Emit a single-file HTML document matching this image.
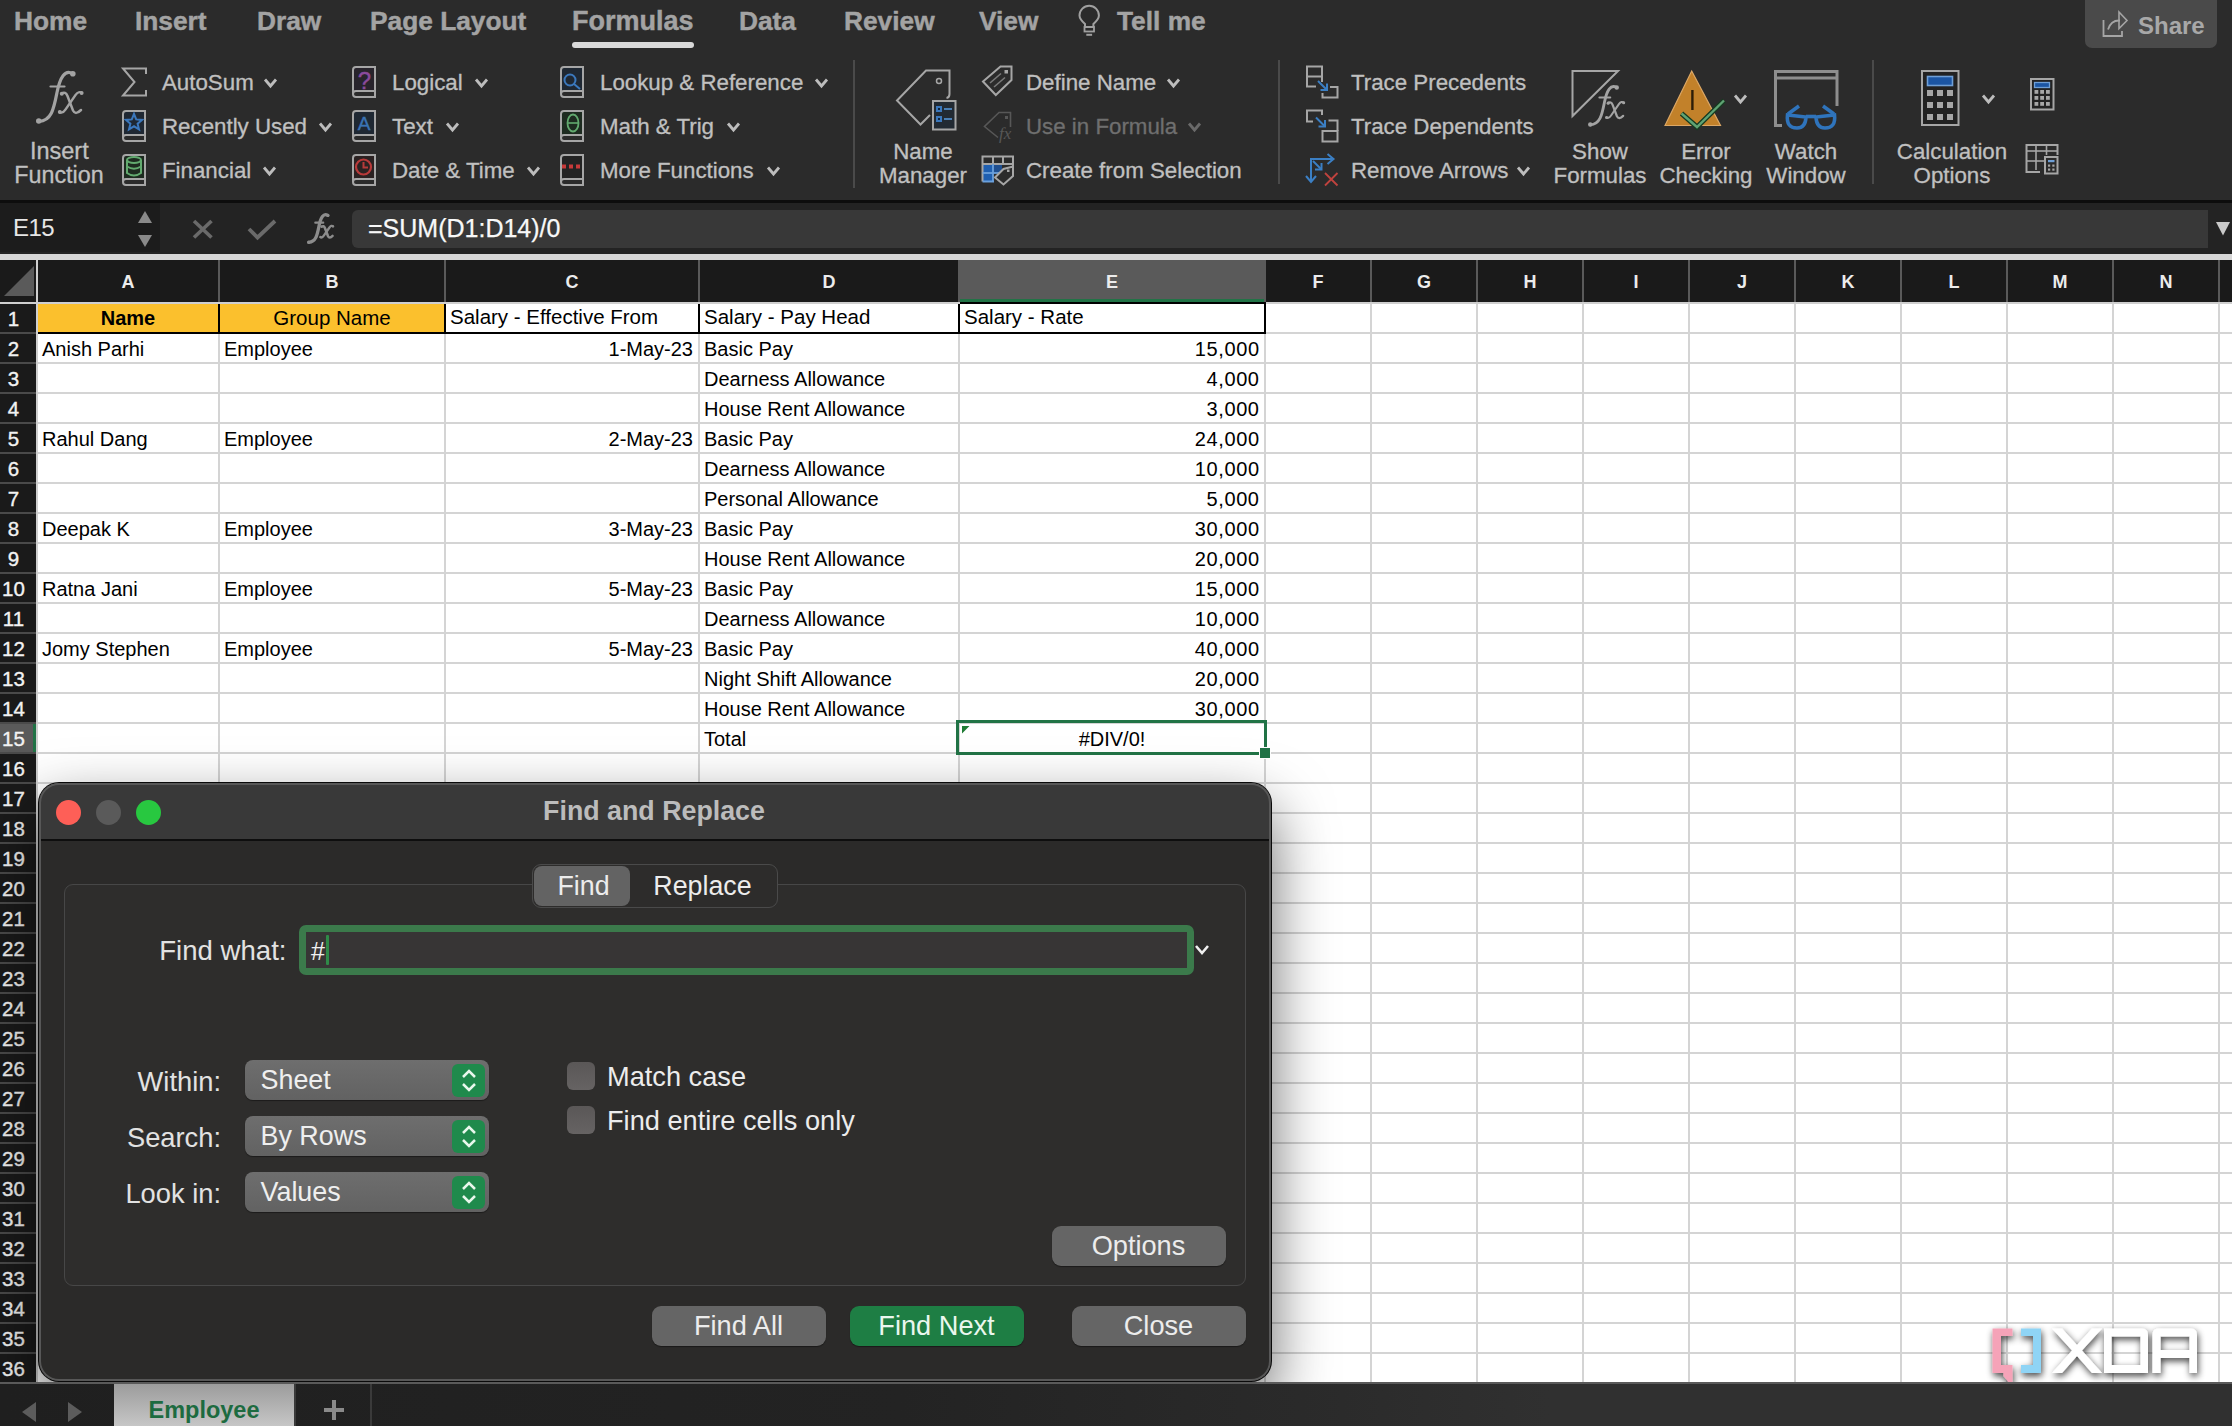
<!DOCTYPE html>
<html><head><meta charset="utf-8">
<style>
html,body{margin:0;padding:0;}
body{width:2232px;height:1426px;overflow:hidden;position:relative;background:#2b2b2b;font-family:"Liberation Sans",sans-serif;}
.t{position:absolute;white-space:pre;}
.r{position:absolute;}
</style></head><body>

<div class="t" style="top:8.2px;font-size:26.3px;line-height:26.3px;color:#a3a3a3;font-weight:700;left:14px;-webkit-text-stroke:0.45px #a3a3a3;">Home</div>
<div class="t" style="top:8.2px;font-size:26.3px;line-height:26.3px;color:#a3a3a3;font-weight:700;left:135px;-webkit-text-stroke:0.45px #a3a3a3;">Insert</div>
<div class="t" style="top:8.2px;font-size:26.3px;line-height:26.3px;color:#a3a3a3;font-weight:700;left:257px;-webkit-text-stroke:0.45px #a3a3a3;">Draw</div>
<div class="t" style="top:8.2px;font-size:26.3px;line-height:26.3px;color:#a3a3a3;font-weight:700;left:370px;-webkit-text-stroke:0.45px #a3a3a3;">Page Layout</div>
<div class="t" style="top:7.6px;font-size:27px;line-height:27px;color:#a3a3a3;font-weight:700;left:572px;-webkit-text-stroke:0.45px #a3a3a3;">Formulas</div>
<div class="t" style="top:8.2px;font-size:26.3px;line-height:26.3px;color:#a3a3a3;font-weight:700;left:739px;-webkit-text-stroke:0.45px #a3a3a3;">Data</div>
<div class="t" style="top:8.2px;font-size:26.3px;line-height:26.3px;color:#a3a3a3;font-weight:700;left:844px;-webkit-text-stroke:0.45px #a3a3a3;">Review</div>
<div class="t" style="top:8.2px;font-size:26.3px;line-height:26.3px;color:#a3a3a3;font-weight:700;left:979px;-webkit-text-stroke:0.45px #a3a3a3;">View</div>
<div class="t" style="top:8.2px;font-size:26.3px;line-height:26.3px;color:#a3a3a3;font-weight:700;left:1117px;-webkit-text-stroke:0.45px #a3a3a3;">Tell me</div>
<div class="r" style="left:572px;top:42px;width:122px;height:6px;background:#d9d9d9;border-radius:3px;"></div>
<div class="r" style="left:2085px;top:0px;width:132px;height:48px;background:#4a4a4a;border-radius:0 0 7px 7px;"></div>
<div class="t" style="top:13.7px;font-size:24px;line-height:24px;color:#a8a8a8;font-weight:700;left:2138px;">Share</div>
<div class="t" style="top:139.6px;font-size:23.5px;line-height:23.5px;color:#c0c0c0;font-weight:400;left:-940.7px;width:2000px;text-align:center;-webkit-text-stroke:0.3px #c0c0c0;">Insert</div>
<div class="t" style="top:163.8px;font-size:23.3px;line-height:23.3px;color:#c0c0c0;font-weight:400;left:-941px;width:2000px;text-align:center;-webkit-text-stroke:0.3px #c0c0c0;">Function</div>
<div class="t" style="top:71.6px;font-size:22.3px;line-height:22.3px;color:#c0c0c0;font-weight:400;left:162px;-webkit-text-stroke:0.3px #c0c0c0;">AutoSum</div>
<div class="t" style="top:116.1px;font-size:22.3px;line-height:22.3px;color:#c0c0c0;font-weight:400;left:162px;-webkit-text-stroke:0.3px #c0c0c0;">Recently Used</div>
<div class="t" style="top:160.1px;font-size:22.3px;line-height:22.3px;color:#c0c0c0;font-weight:400;left:162px;-webkit-text-stroke:0.3px #c0c0c0;">Financial</div>
<div class="t" style="top:71.6px;font-size:22.3px;line-height:22.3px;color:#c0c0c0;font-weight:400;left:392px;-webkit-text-stroke:0.3px #c0c0c0;">Logical</div>
<div class="t" style="top:116.1px;font-size:22.3px;line-height:22.3px;color:#c0c0c0;font-weight:400;left:392px;-webkit-text-stroke:0.3px #c0c0c0;">Text</div>
<div class="t" style="top:160.1px;font-size:22.3px;line-height:22.3px;color:#c0c0c0;font-weight:400;left:392px;-webkit-text-stroke:0.3px #c0c0c0;">Date &amp; Time</div>
<div class="t" style="top:71.6px;font-size:22.3px;line-height:22.3px;color:#c0c0c0;font-weight:400;left:600px;-webkit-text-stroke:0.3px #c0c0c0;">Lookup &amp; Reference</div>
<div class="t" style="top:116.1px;font-size:22.3px;line-height:22.3px;color:#c0c0c0;font-weight:400;left:600px;-webkit-text-stroke:0.3px #c0c0c0;">Math &amp; Trig</div>
<div class="t" style="top:160.1px;font-size:22.3px;line-height:22.3px;color:#c0c0c0;font-weight:400;left:600px;-webkit-text-stroke:0.3px #c0c0c0;">More Functions</div>
<div class="r" style="left:853px;top:60px;width:2px;height:128px;background:#4a4a4a;"></div>
<div class="t" style="top:140.6px;font-size:22.3px;line-height:22.3px;color:#c0c0c0;font-weight:400;left:-77px;width:2000px;text-align:center;-webkit-text-stroke:0.3px #c0c0c0;">Name</div>
<div class="t" style="top:164.6px;font-size:22.3px;line-height:22.3px;color:#c0c0c0;font-weight:400;left:-77px;width:2000px;text-align:center;-webkit-text-stroke:0.3px #c0c0c0;">Manager</div>
<div class="t" style="top:71.6px;font-size:22.3px;line-height:22.3px;color:#c0c0c0;font-weight:400;left:1026px;-webkit-text-stroke:0.3px #c0c0c0;">Define Name</div>
<div class="t" style="top:116.1px;font-size:22.3px;line-height:22.3px;color:#6f6f6f;font-weight:400;left:1026px;-webkit-text-stroke:0.3px #6f6f6f;">Use in Formula</div>
<div class="t" style="top:160.1px;font-size:22.3px;line-height:22.3px;color:#c0c0c0;font-weight:400;left:1026px;-webkit-text-stroke:0.3px #c0c0c0;">Create from Selection</div>
<div class="r" style="left:1278px;top:60px;width:2px;height:124px;background:#4a4a4a;"></div>
<div class="t" style="top:71.6px;font-size:22.3px;line-height:22.3px;color:#c0c0c0;font-weight:400;left:1351px;-webkit-text-stroke:0.3px #c0c0c0;">Trace Precedents</div>
<div class="t" style="top:116.1px;font-size:22.3px;line-height:22.3px;color:#c0c0c0;font-weight:400;left:1351px;-webkit-text-stroke:0.3px #c0c0c0;">Trace Dependents</div>
<div class="t" style="top:160.1px;font-size:22.3px;line-height:22.3px;color:#c0c0c0;font-weight:400;left:1351px;-webkit-text-stroke:0.3px #c0c0c0;">Remove Arrows</div>
<div class="t" style="top:140.6px;font-size:22.3px;line-height:22.3px;color:#c0c0c0;font-weight:400;left:600px;width:2000px;text-align:center;-webkit-text-stroke:0.3px #c0c0c0;">Show</div>
<div class="t" style="top:164.6px;font-size:22.3px;line-height:22.3px;color:#c0c0c0;font-weight:400;left:600px;width:2000px;text-align:center;-webkit-text-stroke:0.3px #c0c0c0;">Formulas</div>
<div class="t" style="top:140.6px;font-size:22.3px;line-height:22.3px;color:#c0c0c0;font-weight:400;left:706px;width:2000px;text-align:center;-webkit-text-stroke:0.3px #c0c0c0;">Error</div>
<div class="t" style="top:164.6px;font-size:22.3px;line-height:22.3px;color:#c0c0c0;font-weight:400;left:706px;width:2000px;text-align:center;-webkit-text-stroke:0.3px #c0c0c0;">Checking</div>
<div class="t" style="top:140.6px;font-size:22.3px;line-height:22.3px;color:#c0c0c0;font-weight:400;left:806px;width:2000px;text-align:center;-webkit-text-stroke:0.3px #c0c0c0;">Watch</div>
<div class="t" style="top:164.6px;font-size:22.3px;line-height:22.3px;color:#c0c0c0;font-weight:400;left:806px;width:2000px;text-align:center;-webkit-text-stroke:0.3px #c0c0c0;">Window</div>
<div class="r" style="left:1872px;top:60px;width:2px;height:124px;background:#4a4a4a;"></div>
<div class="t" style="top:140.6px;font-size:22.3px;line-height:22.3px;color:#c0c0c0;font-weight:400;left:952px;width:2000px;text-align:center;-webkit-text-stroke:0.3px #c0c0c0;">Calculation</div>
<div class="t" style="top:164.6px;font-size:22.3px;line-height:22.3px;color:#c0c0c0;font-weight:400;left:952px;width:2000px;text-align:center;-webkit-text-stroke:0.3px #c0c0c0;">Options</div>
<div class="r" style="left:0px;top:200px;width:2232px;height:3px;background:#0d0d0d;"></div>
<div class="r" style="left:0px;top:203px;width:2232px;height:51px;background:#232323;"></div>
<div class="r" style="left:0px;top:203px;width:160px;height:49px;background:#1c1c1c;"></div>
<div class="t" style="top:215.7px;font-size:24px;line-height:24px;color:#e6e6e6;font-weight:400;left:13px;letter-spacing:-0.5px;">E15</div>
<div class="r" style="left:352px;top:210px;width:1856px;height:38px;background:#383838;border-radius:6px 0 0 6px;"></div>
<div class="t" style="top:216.3px;font-size:25px;line-height:25px;color:#f8f8f8;font-weight:400;left:368px;-webkit-text-stroke:0.25px #f8f8f8;">=SUM(D1:D14)/0</div>
<div class="r" style="left:0px;top:254px;width:2232px;height:6px;background:#d6d6d6;"></div>
<div class="r" style="left:0px;top:260px;width:2232px;height:1124px;background:#ffffff;"></div>
<div class="r" style="left:0px;top:260px;width:2232px;height:42px;background:#1a1a1a;"></div>
<div class="r" style="left:0px;top:302px;width:2232px;height:2px;background:#cfcfcf;"></div>
<div class="r" style="left:0px;top:304px;width:36px;height:1080px;background:#1a1a1a;"></div>
<div class="r" style="left:36px;top:260px;width:2px;height:1124px;background:#cfcfcf;"></div>
<div class="r" style="left:960px;top:260px;width:304px;height:42px;background:#5a5a5a;"></div>
<div class="r" style="left:960px;top:299px;width:304px;height:3px;background:#217346;"></div>
<div class="r" style="left:218px;top:260px;width:2px;height:42px;background:#5a5a5a;"></div>
<div class="r" style="left:218px;top:304px;width:2px;height:1080px;background:#d4d4d4;"></div>
<div class="t" style="top:272.8px;font-size:18px;line-height:18px;color:#ececec;font-weight:700;left:-872.0px;width:2000px;text-align:center;">A</div>
<div class="r" style="left:444px;top:260px;width:2px;height:42px;background:#5a5a5a;"></div>
<div class="r" style="left:444px;top:304px;width:2px;height:1080px;background:#d4d4d4;"></div>
<div class="t" style="top:272.8px;font-size:18px;line-height:18px;color:#ececec;font-weight:700;left:-668.0px;width:2000px;text-align:center;">B</div>
<div class="r" style="left:698px;top:260px;width:2px;height:42px;background:#5a5a5a;"></div>
<div class="r" style="left:698px;top:304px;width:2px;height:1080px;background:#d4d4d4;"></div>
<div class="t" style="top:272.8px;font-size:18px;line-height:18px;color:#ececec;font-weight:700;left:-428.0px;width:2000px;text-align:center;">C</div>
<div class="r" style="left:958px;top:260px;width:2px;height:42px;background:#5a5a5a;"></div>
<div class="r" style="left:958px;top:304px;width:2px;height:1080px;background:#d4d4d4;"></div>
<div class="t" style="top:272.8px;font-size:18px;line-height:18px;color:#ececec;font-weight:700;left:-171.0px;width:2000px;text-align:center;">D</div>
<div class="r" style="left:1264px;top:260px;width:2px;height:42px;background:#5a5a5a;"></div>
<div class="r" style="left:1264px;top:304px;width:2px;height:1080px;background:#d4d4d4;"></div>
<div class="t" style="top:272.8px;font-size:18px;line-height:18px;color:#ececec;font-weight:700;left:112.0px;width:2000px;text-align:center;">E</div>
<div class="r" style="left:1370px;top:260px;width:2px;height:42px;background:#5a5a5a;"></div>
<div class="r" style="left:1370px;top:304px;width:2px;height:1080px;background:#d4d4d4;"></div>
<div class="t" style="top:272.8px;font-size:18px;line-height:18px;color:#ececec;font-weight:700;left:318.0px;width:2000px;text-align:center;">F</div>
<div class="r" style="left:1476px;top:260px;width:2px;height:42px;background:#5a5a5a;"></div>
<div class="r" style="left:1476px;top:304px;width:2px;height:1080px;background:#d4d4d4;"></div>
<div class="t" style="top:272.8px;font-size:18px;line-height:18px;color:#ececec;font-weight:700;left:424.0px;width:2000px;text-align:center;">G</div>
<div class="r" style="left:1582px;top:260px;width:2px;height:42px;background:#5a5a5a;"></div>
<div class="r" style="left:1582px;top:304px;width:2px;height:1080px;background:#d4d4d4;"></div>
<div class="t" style="top:272.8px;font-size:18px;line-height:18px;color:#ececec;font-weight:700;left:530.0px;width:2000px;text-align:center;">H</div>
<div class="r" style="left:1688px;top:260px;width:2px;height:42px;background:#5a5a5a;"></div>
<div class="r" style="left:1688px;top:304px;width:2px;height:1080px;background:#d4d4d4;"></div>
<div class="t" style="top:272.8px;font-size:18px;line-height:18px;color:#ececec;font-weight:700;left:636.0px;width:2000px;text-align:center;">I</div>
<div class="r" style="left:1794px;top:260px;width:2px;height:42px;background:#5a5a5a;"></div>
<div class="r" style="left:1794px;top:304px;width:2px;height:1080px;background:#d4d4d4;"></div>
<div class="t" style="top:272.8px;font-size:18px;line-height:18px;color:#ececec;font-weight:700;left:742.0px;width:2000px;text-align:center;">J</div>
<div class="r" style="left:1900px;top:260px;width:2px;height:42px;background:#5a5a5a;"></div>
<div class="r" style="left:1900px;top:304px;width:2px;height:1080px;background:#d4d4d4;"></div>
<div class="t" style="top:272.8px;font-size:18px;line-height:18px;color:#ececec;font-weight:700;left:848.0px;width:2000px;text-align:center;">K</div>
<div class="r" style="left:2006px;top:260px;width:2px;height:42px;background:#5a5a5a;"></div>
<div class="r" style="left:2006px;top:304px;width:2px;height:1080px;background:#d4d4d4;"></div>
<div class="t" style="top:272.8px;font-size:18px;line-height:18px;color:#ececec;font-weight:700;left:954.0px;width:2000px;text-align:center;">L</div>
<div class="r" style="left:2112px;top:260px;width:2px;height:42px;background:#5a5a5a;"></div>
<div class="r" style="left:2112px;top:304px;width:2px;height:1080px;background:#d4d4d4;"></div>
<div class="t" style="top:272.8px;font-size:18px;line-height:18px;color:#ececec;font-weight:700;left:1060.0px;width:2000px;text-align:center;">M</div>
<div class="r" style="left:2218px;top:260px;width:2px;height:42px;background:#5a5a5a;"></div>
<div class="r" style="left:2218px;top:304px;width:2px;height:1080px;background:#d4d4d4;"></div>
<div class="t" style="top:272.8px;font-size:18px;line-height:18px;color:#ececec;font-weight:700;left:1166.0px;width:2000px;text-align:center;">N</div>
<svg class="r" style="left:2px;top:262px;" width="34" height="38" viewBox="0 0 34 38"><polygon points="32,4 32,34 2,34" fill="#5a5a5a"/></svg>
<div class="r" style="left:38px;top:332px;width:2194px;height:2px;background:#d4d4d4;"></div>
<div class="r" style="left:0px;top:332px;width:36px;height:2px;background:#4a4a4a;"></div>
<div class="r" style="left:38px;top:362px;width:2194px;height:2px;background:#d4d4d4;"></div>
<div class="r" style="left:0px;top:362px;width:36px;height:2px;background:#4a4a4a;"></div>
<div class="r" style="left:38px;top:392px;width:2194px;height:2px;background:#d4d4d4;"></div>
<div class="r" style="left:0px;top:392px;width:36px;height:2px;background:#4a4a4a;"></div>
<div class="r" style="left:38px;top:422px;width:2194px;height:2px;background:#d4d4d4;"></div>
<div class="r" style="left:0px;top:422px;width:36px;height:2px;background:#4a4a4a;"></div>
<div class="r" style="left:38px;top:452px;width:2194px;height:2px;background:#d4d4d4;"></div>
<div class="r" style="left:0px;top:452px;width:36px;height:2px;background:#4a4a4a;"></div>
<div class="r" style="left:38px;top:482px;width:2194px;height:2px;background:#d4d4d4;"></div>
<div class="r" style="left:0px;top:482px;width:36px;height:2px;background:#4a4a4a;"></div>
<div class="r" style="left:38px;top:512px;width:2194px;height:2px;background:#d4d4d4;"></div>
<div class="r" style="left:0px;top:512px;width:36px;height:2px;background:#4a4a4a;"></div>
<div class="r" style="left:38px;top:542px;width:2194px;height:2px;background:#d4d4d4;"></div>
<div class="r" style="left:0px;top:542px;width:36px;height:2px;background:#4a4a4a;"></div>
<div class="r" style="left:38px;top:572px;width:2194px;height:2px;background:#d4d4d4;"></div>
<div class="r" style="left:0px;top:572px;width:36px;height:2px;background:#4a4a4a;"></div>
<div class="r" style="left:38px;top:602px;width:2194px;height:2px;background:#d4d4d4;"></div>
<div class="r" style="left:0px;top:602px;width:36px;height:2px;background:#4a4a4a;"></div>
<div class="r" style="left:38px;top:632px;width:2194px;height:2px;background:#d4d4d4;"></div>
<div class="r" style="left:0px;top:632px;width:36px;height:2px;background:#4a4a4a;"></div>
<div class="r" style="left:38px;top:662px;width:2194px;height:2px;background:#d4d4d4;"></div>
<div class="r" style="left:0px;top:662px;width:36px;height:2px;background:#4a4a4a;"></div>
<div class="r" style="left:38px;top:692px;width:2194px;height:2px;background:#d4d4d4;"></div>
<div class="r" style="left:0px;top:692px;width:36px;height:2px;background:#4a4a4a;"></div>
<div class="r" style="left:38px;top:722px;width:2194px;height:2px;background:#d4d4d4;"></div>
<div class="r" style="left:0px;top:722px;width:36px;height:2px;background:#4a4a4a;"></div>
<div class="r" style="left:38px;top:752px;width:2194px;height:2px;background:#d4d4d4;"></div>
<div class="r" style="left:0px;top:752px;width:36px;height:2px;background:#4a4a4a;"></div>
<div class="r" style="left:38px;top:782px;width:2194px;height:2px;background:#d4d4d4;"></div>
<div class="r" style="left:0px;top:782px;width:36px;height:2px;background:#4a4a4a;"></div>
<div class="r" style="left:38px;top:812px;width:2194px;height:2px;background:#d4d4d4;"></div>
<div class="r" style="left:0px;top:812px;width:36px;height:2px;background:#4a4a4a;"></div>
<div class="r" style="left:38px;top:842px;width:2194px;height:2px;background:#d4d4d4;"></div>
<div class="r" style="left:0px;top:842px;width:36px;height:2px;background:#4a4a4a;"></div>
<div class="r" style="left:38px;top:872px;width:2194px;height:2px;background:#d4d4d4;"></div>
<div class="r" style="left:0px;top:872px;width:36px;height:2px;background:#4a4a4a;"></div>
<div class="r" style="left:38px;top:902px;width:2194px;height:2px;background:#d4d4d4;"></div>
<div class="r" style="left:0px;top:902px;width:36px;height:2px;background:#4a4a4a;"></div>
<div class="r" style="left:38px;top:932px;width:2194px;height:2px;background:#d4d4d4;"></div>
<div class="r" style="left:0px;top:932px;width:36px;height:2px;background:#4a4a4a;"></div>
<div class="r" style="left:38px;top:962px;width:2194px;height:2px;background:#d4d4d4;"></div>
<div class="r" style="left:0px;top:962px;width:36px;height:2px;background:#4a4a4a;"></div>
<div class="r" style="left:38px;top:992px;width:2194px;height:2px;background:#d4d4d4;"></div>
<div class="r" style="left:0px;top:992px;width:36px;height:2px;background:#4a4a4a;"></div>
<div class="r" style="left:38px;top:1022px;width:2194px;height:2px;background:#d4d4d4;"></div>
<div class="r" style="left:0px;top:1022px;width:36px;height:2px;background:#4a4a4a;"></div>
<div class="r" style="left:38px;top:1052px;width:2194px;height:2px;background:#d4d4d4;"></div>
<div class="r" style="left:0px;top:1052px;width:36px;height:2px;background:#4a4a4a;"></div>
<div class="r" style="left:38px;top:1082px;width:2194px;height:2px;background:#d4d4d4;"></div>
<div class="r" style="left:0px;top:1082px;width:36px;height:2px;background:#4a4a4a;"></div>
<div class="r" style="left:38px;top:1112px;width:2194px;height:2px;background:#d4d4d4;"></div>
<div class="r" style="left:0px;top:1112px;width:36px;height:2px;background:#4a4a4a;"></div>
<div class="r" style="left:38px;top:1142px;width:2194px;height:2px;background:#d4d4d4;"></div>
<div class="r" style="left:0px;top:1142px;width:36px;height:2px;background:#4a4a4a;"></div>
<div class="r" style="left:38px;top:1172px;width:2194px;height:2px;background:#d4d4d4;"></div>
<div class="r" style="left:0px;top:1172px;width:36px;height:2px;background:#4a4a4a;"></div>
<div class="r" style="left:38px;top:1202px;width:2194px;height:2px;background:#d4d4d4;"></div>
<div class="r" style="left:0px;top:1202px;width:36px;height:2px;background:#4a4a4a;"></div>
<div class="r" style="left:38px;top:1232px;width:2194px;height:2px;background:#d4d4d4;"></div>
<div class="r" style="left:0px;top:1232px;width:36px;height:2px;background:#4a4a4a;"></div>
<div class="r" style="left:38px;top:1262px;width:2194px;height:2px;background:#d4d4d4;"></div>
<div class="r" style="left:0px;top:1262px;width:36px;height:2px;background:#4a4a4a;"></div>
<div class="r" style="left:38px;top:1292px;width:2194px;height:2px;background:#d4d4d4;"></div>
<div class="r" style="left:0px;top:1292px;width:36px;height:2px;background:#4a4a4a;"></div>
<div class="r" style="left:38px;top:1322px;width:2194px;height:2px;background:#d4d4d4;"></div>
<div class="r" style="left:0px;top:1322px;width:36px;height:2px;background:#4a4a4a;"></div>
<div class="r" style="left:38px;top:1352px;width:2194px;height:2px;background:#d4d4d4;"></div>
<div class="r" style="left:0px;top:1352px;width:36px;height:2px;background:#4a4a4a;"></div>
<div class="r" style="left:38px;top:1382px;width:2194px;height:2px;background:#d4d4d4;"></div>
<div class="r" style="left:0px;top:1382px;width:36px;height:2px;background:#4a4a4a;"></div>
<div class="r" style="left:0px;top:724px;width:36px;height:28px;background:#5a5a5a;"></div>
<div class="r" style="left:33px;top:724px;width:3px;height:28px;background:#217346;"></div>
<div class="t" style="top:308.6px;font-size:20.5px;line-height:20.5px;color:#f2f2f2;font-weight:400;left:-986.5px;width:2000px;text-align:center;-webkit-text-stroke:0.35px #f2f2f2;">1</div>
<div class="t" style="top:338.6px;font-size:20.5px;line-height:20.5px;color:#f2f2f2;font-weight:400;left:-986.5px;width:2000px;text-align:center;-webkit-text-stroke:0.35px #f2f2f2;">2</div>
<div class="t" style="top:368.6px;font-size:20.5px;line-height:20.5px;color:#f2f2f2;font-weight:400;left:-986.5px;width:2000px;text-align:center;-webkit-text-stroke:0.35px #f2f2f2;">3</div>
<div class="t" style="top:398.6px;font-size:20.5px;line-height:20.5px;color:#f2f2f2;font-weight:400;left:-986.5px;width:2000px;text-align:center;-webkit-text-stroke:0.35px #f2f2f2;">4</div>
<div class="t" style="top:428.6px;font-size:20.5px;line-height:20.5px;color:#f2f2f2;font-weight:400;left:-986.5px;width:2000px;text-align:center;-webkit-text-stroke:0.35px #f2f2f2;">5</div>
<div class="t" style="top:458.6px;font-size:20.5px;line-height:20.5px;color:#f2f2f2;font-weight:400;left:-986.5px;width:2000px;text-align:center;-webkit-text-stroke:0.35px #f2f2f2;">6</div>
<div class="t" style="top:488.6px;font-size:20.5px;line-height:20.5px;color:#f2f2f2;font-weight:400;left:-986.5px;width:2000px;text-align:center;-webkit-text-stroke:0.35px #f2f2f2;">7</div>
<div class="t" style="top:518.6px;font-size:20.5px;line-height:20.5px;color:#f2f2f2;font-weight:400;left:-986.5px;width:2000px;text-align:center;-webkit-text-stroke:0.35px #f2f2f2;">8</div>
<div class="t" style="top:548.6px;font-size:20.5px;line-height:20.5px;color:#f2f2f2;font-weight:400;left:-986.5px;width:2000px;text-align:center;-webkit-text-stroke:0.35px #f2f2f2;">9</div>
<div class="t" style="top:578.6px;font-size:20.5px;line-height:20.5px;color:#f2f2f2;font-weight:400;left:-986.5px;width:2000px;text-align:center;-webkit-text-stroke:0.35px #f2f2f2;">10</div>
<div class="t" style="top:608.6px;font-size:20.5px;line-height:20.5px;color:#f2f2f2;font-weight:400;left:-986.5px;width:2000px;text-align:center;-webkit-text-stroke:0.35px #f2f2f2;">11</div>
<div class="t" style="top:638.6px;font-size:20.5px;line-height:20.5px;color:#f2f2f2;font-weight:400;left:-986.5px;width:2000px;text-align:center;-webkit-text-stroke:0.35px #f2f2f2;">12</div>
<div class="t" style="top:668.6px;font-size:20.5px;line-height:20.5px;color:#f2f2f2;font-weight:400;left:-986.5px;width:2000px;text-align:center;-webkit-text-stroke:0.35px #f2f2f2;">13</div>
<div class="t" style="top:698.6px;font-size:20.5px;line-height:20.5px;color:#f2f2f2;font-weight:400;left:-986.5px;width:2000px;text-align:center;-webkit-text-stroke:0.35px #f2f2f2;">14</div>
<div class="t" style="top:728.6px;font-size:20.5px;line-height:20.5px;color:#f2f2f2;font-weight:400;left:-986.5px;width:2000px;text-align:center;-webkit-text-stroke:0.35px #f2f2f2;">15</div>
<div class="t" style="top:758.6px;font-size:20.5px;line-height:20.5px;color:#f2f2f2;font-weight:400;left:-986.5px;width:2000px;text-align:center;-webkit-text-stroke:0.35px #f2f2f2;">16</div>
<div class="t" style="top:788.6px;font-size:20.5px;line-height:20.5px;color:#f2f2f2;font-weight:400;left:-986.5px;width:2000px;text-align:center;-webkit-text-stroke:0.35px #f2f2f2;">17</div>
<div class="t" style="top:818.6px;font-size:20.5px;line-height:20.5px;color:#f2f2f2;font-weight:400;left:-986.5px;width:2000px;text-align:center;-webkit-text-stroke:0.35px #f2f2f2;">18</div>
<div class="t" style="top:848.6px;font-size:20.5px;line-height:20.5px;color:#f2f2f2;font-weight:400;left:-986.5px;width:2000px;text-align:center;-webkit-text-stroke:0.35px #f2f2f2;">19</div>
<div class="t" style="top:878.6px;font-size:20.5px;line-height:20.5px;color:#f2f2f2;font-weight:400;left:-986.5px;width:2000px;text-align:center;-webkit-text-stroke:0.35px #f2f2f2;">20</div>
<div class="t" style="top:908.6px;font-size:20.5px;line-height:20.5px;color:#f2f2f2;font-weight:400;left:-986.5px;width:2000px;text-align:center;-webkit-text-stroke:0.35px #f2f2f2;">21</div>
<div class="t" style="top:938.6px;font-size:20.5px;line-height:20.5px;color:#f2f2f2;font-weight:400;left:-986.5px;width:2000px;text-align:center;-webkit-text-stroke:0.35px #f2f2f2;">22</div>
<div class="t" style="top:968.6px;font-size:20.5px;line-height:20.5px;color:#f2f2f2;font-weight:400;left:-986.5px;width:2000px;text-align:center;-webkit-text-stroke:0.35px #f2f2f2;">23</div>
<div class="t" style="top:998.6px;font-size:20.5px;line-height:20.5px;color:#f2f2f2;font-weight:400;left:-986.5px;width:2000px;text-align:center;-webkit-text-stroke:0.35px #f2f2f2;">24</div>
<div class="t" style="top:1028.6px;font-size:20.5px;line-height:20.5px;color:#f2f2f2;font-weight:400;left:-986.5px;width:2000px;text-align:center;-webkit-text-stroke:0.35px #f2f2f2;">25</div>
<div class="t" style="top:1058.6px;font-size:20.5px;line-height:20.5px;color:#f2f2f2;font-weight:400;left:-986.5px;width:2000px;text-align:center;-webkit-text-stroke:0.35px #f2f2f2;">26</div>
<div class="t" style="top:1088.6px;font-size:20.5px;line-height:20.5px;color:#f2f2f2;font-weight:400;left:-986.5px;width:2000px;text-align:center;-webkit-text-stroke:0.35px #f2f2f2;">27</div>
<div class="t" style="top:1118.6px;font-size:20.5px;line-height:20.5px;color:#f2f2f2;font-weight:400;left:-986.5px;width:2000px;text-align:center;-webkit-text-stroke:0.35px #f2f2f2;">28</div>
<div class="t" style="top:1148.6px;font-size:20.5px;line-height:20.5px;color:#f2f2f2;font-weight:400;left:-986.5px;width:2000px;text-align:center;-webkit-text-stroke:0.35px #f2f2f2;">29</div>
<div class="t" style="top:1178.6px;font-size:20.5px;line-height:20.5px;color:#f2f2f2;font-weight:400;left:-986.5px;width:2000px;text-align:center;-webkit-text-stroke:0.35px #f2f2f2;">30</div>
<div class="t" style="top:1208.6px;font-size:20.5px;line-height:20.5px;color:#f2f2f2;font-weight:400;left:-986.5px;width:2000px;text-align:center;-webkit-text-stroke:0.35px #f2f2f2;">31</div>
<div class="t" style="top:1238.6px;font-size:20.5px;line-height:20.5px;color:#f2f2f2;font-weight:400;left:-986.5px;width:2000px;text-align:center;-webkit-text-stroke:0.35px #f2f2f2;">32</div>
<div class="t" style="top:1268.6px;font-size:20.5px;line-height:20.5px;color:#f2f2f2;font-weight:400;left:-986.5px;width:2000px;text-align:center;-webkit-text-stroke:0.35px #f2f2f2;">33</div>
<div class="t" style="top:1298.6px;font-size:20.5px;line-height:20.5px;color:#f2f2f2;font-weight:400;left:-986.5px;width:2000px;text-align:center;-webkit-text-stroke:0.35px #f2f2f2;">34</div>
<div class="t" style="top:1328.6px;font-size:20.5px;line-height:20.5px;color:#f2f2f2;font-weight:400;left:-986.5px;width:2000px;text-align:center;-webkit-text-stroke:0.35px #f2f2f2;">35</div>
<div class="t" style="top:1358.6px;font-size:20.5px;line-height:20.5px;color:#f2f2f2;font-weight:400;left:-986.5px;width:2000px;text-align:center;-webkit-text-stroke:0.35px #f2f2f2;">36</div>
<div class="r" style="left:38px;top:304px;width:180px;height:28px;background:#fbc02d;"></div>
<div class="r" style="left:220px;top:304px;width:224px;height:28px;background:#fbc02d;"></div>
<div class="r" style="left:38px;top:332px;width:1228px;height:2px;background:#000;"></div>
<div class="r" style="left:218px;top:304px;width:2px;height:30px;background:#000;"></div>
<div class="r" style="left:444px;top:304px;width:2px;height:30px;background:#000;"></div>
<div class="r" style="left:698px;top:304px;width:2px;height:30px;background:#000;"></div>
<div class="r" style="left:958px;top:304px;width:2px;height:30px;background:#000;"></div>
<div class="r" style="left:1264px;top:304px;width:2px;height:30px;background:#000;"></div>
<div class="r" style="left:960px;top:302px;width:306px;height:2px;background:#000;"></div>
<div class="t" style="top:308.1px;font-size:20px;line-height:20px;color:#000;font-weight:700;left:-872px;width:2000px;text-align:center;">Name</div>
<div class="t" style="top:308.1px;font-size:20.5px;line-height:20.5px;color:#000;font-weight:400;left:-668px;width:2000px;text-align:center;">Group Name</div>
<div class="t" style="top:307.1px;font-size:20.5px;line-height:20.5px;color:#000;font-weight:400;left:450px;">Salary - Effective From</div>
<div class="t" style="top:307.1px;font-size:20.5px;line-height:20.5px;color:#000;font-weight:400;left:704px;">Salary - Pay Head</div>
<div class="t" style="top:307.1px;font-size:20.5px;line-height:20.5px;color:#000;font-weight:400;left:964px;">Salary - Rate</div>
<div class="t" style="top:339.1px;font-size:20px;line-height:20px;color:#000;font-weight:400;left:42px;">Anish Parhi</div>
<div class="t" style="top:339.1px;font-size:20px;line-height:20px;color:#000;font-weight:400;left:224px;">Employee</div>
<div class="t" style="top:339.1px;font-size:20px;line-height:20px;color:#000;font-weight:400;left:-1307px;width:2000px;text-align:right;">1-May-23</div>
<div class="t" style="top:339.1px;font-size:20px;line-height:20px;color:#000;font-weight:400;left:704px;">Basic Pay</div>
<div class="t" style="top:339.1px;font-size:20px;line-height:20px;color:#000;font-weight:400;left:-740.4000000000001px;width:2000px;text-align:right;letter-spacing:0.6px;">15,000</div>
<div class="t" style="top:369.1px;font-size:20px;line-height:20px;color:#000;font-weight:400;left:704px;">Dearness Allowance</div>
<div class="t" style="top:369.1px;font-size:20px;line-height:20px;color:#000;font-weight:400;left:-740.4000000000001px;width:2000px;text-align:right;letter-spacing:0.6px;">4,000</div>
<div class="t" style="top:399.1px;font-size:20px;line-height:20px;color:#000;font-weight:400;left:704px;">House Rent Allowance</div>
<div class="t" style="top:399.1px;font-size:20px;line-height:20px;color:#000;font-weight:400;left:-740.4000000000001px;width:2000px;text-align:right;letter-spacing:0.6px;">3,000</div>
<div class="t" style="top:429.1px;font-size:20px;line-height:20px;color:#000;font-weight:400;left:42px;">Rahul Dang</div>
<div class="t" style="top:429.1px;font-size:20px;line-height:20px;color:#000;font-weight:400;left:224px;">Employee</div>
<div class="t" style="top:429.1px;font-size:20px;line-height:20px;color:#000;font-weight:400;left:-1307px;width:2000px;text-align:right;">2-May-23</div>
<div class="t" style="top:429.1px;font-size:20px;line-height:20px;color:#000;font-weight:400;left:704px;">Basic Pay</div>
<div class="t" style="top:429.1px;font-size:20px;line-height:20px;color:#000;font-weight:400;left:-740.4000000000001px;width:2000px;text-align:right;letter-spacing:0.6px;">24,000</div>
<div class="t" style="top:459.1px;font-size:20px;line-height:20px;color:#000;font-weight:400;left:704px;">Dearness Allowance</div>
<div class="t" style="top:459.1px;font-size:20px;line-height:20px;color:#000;font-weight:400;left:-740.4000000000001px;width:2000px;text-align:right;letter-spacing:0.6px;">10,000</div>
<div class="t" style="top:489.1px;font-size:20px;line-height:20px;color:#000;font-weight:400;left:704px;">Personal Allowance</div>
<div class="t" style="top:489.1px;font-size:20px;line-height:20px;color:#000;font-weight:400;left:-740.4000000000001px;width:2000px;text-align:right;letter-spacing:0.6px;">5,000</div>
<div class="t" style="top:519.1px;font-size:20px;line-height:20px;color:#000;font-weight:400;left:42px;">Deepak K</div>
<div class="t" style="top:519.1px;font-size:20px;line-height:20px;color:#000;font-weight:400;left:224px;">Employee</div>
<div class="t" style="top:519.1px;font-size:20px;line-height:20px;color:#000;font-weight:400;left:-1307px;width:2000px;text-align:right;">3-May-23</div>
<div class="t" style="top:519.1px;font-size:20px;line-height:20px;color:#000;font-weight:400;left:704px;">Basic Pay</div>
<div class="t" style="top:519.1px;font-size:20px;line-height:20px;color:#000;font-weight:400;left:-740.4000000000001px;width:2000px;text-align:right;letter-spacing:0.6px;">30,000</div>
<div class="t" style="top:549.1px;font-size:20px;line-height:20px;color:#000;font-weight:400;left:704px;">House Rent Allowance</div>
<div class="t" style="top:549.1px;font-size:20px;line-height:20px;color:#000;font-weight:400;left:-740.4000000000001px;width:2000px;text-align:right;letter-spacing:0.6px;">20,000</div>
<div class="t" style="top:579.1px;font-size:20px;line-height:20px;color:#000;font-weight:400;left:42px;">Ratna Jani</div>
<div class="t" style="top:579.1px;font-size:20px;line-height:20px;color:#000;font-weight:400;left:224px;">Employee</div>
<div class="t" style="top:579.1px;font-size:20px;line-height:20px;color:#000;font-weight:400;left:-1307px;width:2000px;text-align:right;">5-May-23</div>
<div class="t" style="top:579.1px;font-size:20px;line-height:20px;color:#000;font-weight:400;left:704px;">Basic Pay</div>
<div class="t" style="top:579.1px;font-size:20px;line-height:20px;color:#000;font-weight:400;left:-740.4000000000001px;width:2000px;text-align:right;letter-spacing:0.6px;">15,000</div>
<div class="t" style="top:609.1px;font-size:20px;line-height:20px;color:#000;font-weight:400;left:704px;">Dearness Allowance</div>
<div class="t" style="top:609.1px;font-size:20px;line-height:20px;color:#000;font-weight:400;left:-740.4000000000001px;width:2000px;text-align:right;letter-spacing:0.6px;">10,000</div>
<div class="t" style="top:639.1px;font-size:20px;line-height:20px;color:#000;font-weight:400;left:42px;">Jomy Stephen</div>
<div class="t" style="top:639.1px;font-size:20px;line-height:20px;color:#000;font-weight:400;left:224px;">Employee</div>
<div class="t" style="top:639.1px;font-size:20px;line-height:20px;color:#000;font-weight:400;left:-1307px;width:2000px;text-align:right;">5-May-23</div>
<div class="t" style="top:639.1px;font-size:20px;line-height:20px;color:#000;font-weight:400;left:704px;">Basic Pay</div>
<div class="t" style="top:639.1px;font-size:20px;line-height:20px;color:#000;font-weight:400;left:-740.4000000000001px;width:2000px;text-align:right;letter-spacing:0.6px;">40,000</div>
<div class="t" style="top:669.1px;font-size:20px;line-height:20px;color:#000;font-weight:400;left:704px;">Night Shift Allowance</div>
<div class="t" style="top:669.1px;font-size:20px;line-height:20px;color:#000;font-weight:400;left:-740.4000000000001px;width:2000px;text-align:right;letter-spacing:0.6px;">20,000</div>
<div class="t" style="top:699.1px;font-size:20px;line-height:20px;color:#000;font-weight:400;left:704px;">House Rent Allowance</div>
<div class="t" style="top:699.1px;font-size:20px;line-height:20px;color:#000;font-weight:400;left:-740.4000000000001px;width:2000px;text-align:right;letter-spacing:0.6px;">30,000</div>
<div class="t" style="top:729.1px;font-size:20px;line-height:20px;color:#000;font-weight:400;left:704px;">Total</div>
<div class="t" style="top:729.1px;font-size:20px;line-height:20px;color:#000;font-weight:400;left:112px;width:2000px;text-align:center;">#DIV/0!</div>
<div class="r" style="left:956px;top:720px;width:305px;height:29px;border:3px solid #217346;"></div>
<div class="r" style="left:1259px;top:747px;width:10px;height:10px;background:#217346;border:1px solid #fff;"></div>
<svg class="r" style="left:962px;top:726px;" width="8" height="8" viewBox="0 0 8 8"><polygon points="0,0 7.5,0 0,7.5" fill="#1e7b34"/></svg>
<svg class="r" style="left:1960px;top:1300px" width="260" height="100" viewBox="1960 1300 260 100"><defs><filter id="xs" x="-20%" y="-20%" width="140%" height="160%"><feGaussianBlur in="SourceAlpha" stdDeviation="3.5"/><feOffset dx="1" dy="3"/><feComponentTransfer><feFuncA type="linear" slope="0.75"/></feComponentTransfer><feMerge><feMergeNode/><feMergeNode in="SourceGraphic"/></feMerge></filter></defs><g filter="url(#xs)"><path d="M1992.5,1328.5 H2012.5 V1336 H2001 V1365 H2012.5 V1387 L2003.5,1376 V1373 H1992.5 Z" fill="#f5a3b8"/><path d="M2021,1328.5 H2041 V1373 H2021 V1365 H2033 V1336 H2021 Z" fill="#8fd4f5"/><path d="M2052,1328.5 H2062 L2077,1345 L2092,1328.5 H2102 L2082,1350.5 L2102,1373 H2092 L2077,1356 L2062,1373 H2052 L2072,1350.5 Z" fill="#ffffff"/><path d="M2104,1328.5 H2142 Q2148,1328.5 2148,1335 V1373 H2104 Z M2111.5,1336.5 V1365 H2140.5 V1336.5 Z" fill="#ffffff" fill-rule="evenodd"/><path d="M2158,1328.5 H2191 Q2197,1328.5 2197,1335 V1373 H2189.5 V1358 H2160.5 V1373 H2152.5 V1335 Q2152.5,1328.5 2158,1328.5 Z M2160.5,1336.5 V1350 H2189.5 V1336.5 Z" fill="#ffffff" fill-rule="evenodd"/></g></svg>
<div class="r" style="left:39px;top:783px;width:1232px;height:598px;border-radius:20px;background:#2b2a29;box-shadow:0 0 0 1px #0a0a0a, 0 25px 60px rgba(0,0,0,0.6);overflow:hidden;">
<div class="r" style="left:0;top:0;width:1232px;height:598px;border-radius:20px;box-shadow:inset 0 0 0 2px #575757;z-index:3;"></div>
<div class="r" style="left:0;top:0;width:1232px;height:56px;background:#393939;border-top:2px solid #5c5c5c;box-sizing:border-box;"></div>
<div class="r" style="left:0;top:56px;width:1232px;height:2px;background:#0e0e0e;"></div>
</div>
<div class="r" style="left:55.5px;top:799.5px;width:25px;height:25px;background:#fe5f57;border-radius:50%;"></div>
<div class="r" style="left:95.5px;top:799.5px;width:25px;height:25px;background:#5a5a5a;border-radius:50%;"></div>
<div class="r" style="left:135.5px;top:799.5px;width:25px;height:25px;background:#28c840;border-radius:50%;"></div>
<div class="t" style="top:797.8px;font-size:26.8px;line-height:26.8px;color:#bcbcbc;font-weight:700;left:-346px;width:2000px;text-align:center;">Find and Replace</div>
<div class="r" style="left:64px;top:884px;width:1182px;height:402px;background:transparent;border:1.5px solid #474747;border-radius:9px;box-sizing:border-box;background:#2e2d2c;"></div>
<div class="r" style="left:532px;top:864px;width:246px;height:44px;background:#2d2c2b;border:1.5px solid #4a4a4a;border-radius:9px;box-sizing:border-box;"></div>
<div class="r" style="left:534px;top:866px;width:96px;height:40px;background:#636363;border-radius:8px;"></div>
<div class="t" style="top:872.8px;font-size:26.8px;line-height:26.8px;color:#ececec;font-weight:400;left:-416.5px;width:2000px;text-align:center;">Find</div>
<div class="t" style="top:872.8px;font-size:26.8px;line-height:26.8px;color:#ececec;font-weight:400;left:-297.5px;width:2000px;text-align:center;">Replace</div>
<div class="t" style="top:936.9px;font-size:27.6px;line-height:27.6px;color:#e2e2e2;font-weight:400;left:-1713.5px;width:2000px;text-align:right;">Find what:</div>
<div class="r" style="left:299px;top:925px;width:895px;height:50px;background:#373535;border:7px solid #3b7a4b;border-radius:7px;box-sizing:border-box;"></div>
<div class="t" style="top:938.8px;font-size:25px;line-height:25px;color:#f0f0f0;font-weight:400;left:311px;">#</div>
<div class="r" style="left:326px;top:935px;width:3px;height:30px;background:#2f8a48;border-radius:1px;"></div>
<svg class="r" style="left:1194px;top:944px;" width="16" height="12" viewBox="0 0 16 12"><polyline points="2,2 8,9 14,2" fill="none" stroke="#f0f0f0" stroke-width="2.6"/></svg>
<div class="t" style="top:1067.9px;font-size:27.3px;line-height:27.3px;color:#e2e2e2;font-weight:400;left:-1779px;width:2000px;text-align:right;">Within:</div>
<div class="r" style="left:245px;top:1060px;width:244px;height:40px;background:linear-gradient(#6e6e6e,#626262);border-radius:8px;box-shadow:0 1px 1px rgba(0,0,0,0.4);"></div>
<div class="t" style="top:1066.7px;font-size:26.9px;line-height:26.9px;color:#efefef;font-weight:400;left:260.5px;">Sheet</div>
<div class="r" style="left:452px;top:1064px;width:33px;height:33px;background:#1f8a4c;border-radius:6px;"></div>
<svg class="r" style="left:458px;top:1068px;" width="22" height="26" viewBox="0 0 22 26"><polyline points="5,9 11,3 17,9" fill="none" stroke="#e8f7ec" stroke-width="2.5"/><polyline points="5,16 11,22 17,16" fill="none" stroke="#e8f7ec" stroke-width="2.5"/></svg>
<div class="t" style="top:1123.9px;font-size:27.3px;line-height:27.3px;color:#e2e2e2;font-weight:400;left:-1779px;width:2000px;text-align:right;">Search:</div>
<div class="r" style="left:245px;top:1116px;width:244px;height:40px;background:linear-gradient(#6e6e6e,#626262);border-radius:8px;box-shadow:0 1px 1px rgba(0,0,0,0.4);"></div>
<div class="t" style="top:1122.7px;font-size:26.9px;line-height:26.9px;color:#efefef;font-weight:400;left:260.5px;">By Rows</div>
<div class="r" style="left:452px;top:1120px;width:33px;height:33px;background:#1f8a4c;border-radius:6px;"></div>
<svg class="r" style="left:458px;top:1124px;" width="22" height="26" viewBox="0 0 22 26"><polyline points="5,9 11,3 17,9" fill="none" stroke="#e8f7ec" stroke-width="2.5"/><polyline points="5,16 11,22 17,16" fill="none" stroke="#e8f7ec" stroke-width="2.5"/></svg>
<div class="t" style="top:1179.9px;font-size:27.3px;line-height:27.3px;color:#e2e2e2;font-weight:400;left:-1779px;width:2000px;text-align:right;">Look in:</div>
<div class="r" style="left:245px;top:1172px;width:244px;height:40px;background:linear-gradient(#6e6e6e,#626262);border-radius:8px;box-shadow:0 1px 1px rgba(0,0,0,0.4);"></div>
<div class="t" style="top:1178.7px;font-size:26.9px;line-height:26.9px;color:#efefef;font-weight:400;left:260.5px;">Values</div>
<div class="r" style="left:452px;top:1176px;width:33px;height:33px;background:#1f8a4c;border-radius:6px;"></div>
<svg class="r" style="left:458px;top:1180px;" width="22" height="26" viewBox="0 0 22 26"><polyline points="5,9 11,3 17,9" fill="none" stroke="#e8f7ec" stroke-width="2.5"/><polyline points="5,16 11,22 17,16" fill="none" stroke="#e8f7ec" stroke-width="2.5"/></svg>
<div class="r" style="left:567px;top:1062px;width:28px;height:28px;background:linear-gradient(#5a5757,#666363);border-radius:6px;"></div>
<div class="t" style="top:1063.0px;font-size:27.2px;line-height:27.2px;color:#ececec;font-weight:400;left:607px;">Match case</div>
<div class="r" style="left:567px;top:1106px;width:28px;height:28px;background:linear-gradient(#5a5757,#666363);border-radius:6px;"></div>
<div class="t" style="top:1107.0px;font-size:27.2px;line-height:27.2px;color:#ececec;font-weight:400;left:607px;">Find entire cells only</div>
<div class="r" style="left:1052px;top:1226px;width:174px;height:40px;background:#656565;border-radius:9px;box-shadow:0 1px 1px rgba(0,0,0,0.4);"></div>
<div class="t" style="top:1231.5px;font-size:27.2px;line-height:27.2px;color:#ececec;font-weight:400;left:138.5px;width:2000px;text-align:center;">Options</div>
<div class="r" style="left:652px;top:1306px;width:174px;height:40px;background:#656565;border-radius:9px;box-shadow:0 1px 1px rgba(0,0,0,0.4);"></div>
<div class="t" style="top:1311.5px;font-size:27.2px;line-height:27.2px;color:#ececec;font-weight:400;left:-261.5px;width:2000px;text-align:center;">Find All</div>
<div class="r" style="left:850px;top:1306px;width:174px;height:40px;background:#1e7e44;border-radius:9px;box-shadow:0 1px 1px rgba(0,0,0,0.4);"></div>
<div class="t" style="top:1311.5px;font-size:27.2px;line-height:27.2px;color:#eaf7ee;font-weight:400;left:-63.5px;width:2000px;text-align:center;">Find Next</div>
<div class="r" style="left:1072px;top:1306px;width:174px;height:40px;background:#656565;border-radius:9px;box-shadow:0 1px 1px rgba(0,0,0,0.4);"></div>
<div class="t" style="top:1311.5px;font-size:27.2px;line-height:27.2px;color:#ececec;font-weight:400;left:158.5px;width:2000px;text-align:center;">Close</div>
<div class="r" style="left:0px;top:1384px;width:2232px;height:42px;background:linear-gradient(90deg,#1f1f1f 0,#232323 900px,#2a2a2a 1300px,#303030 1550px);"></div>
<div class="r" style="left:0px;top:1382px;width:2232px;height:2px;background:#5a5a5a;"></div>
<div class="r" style="left:114px;top:1384px;width:180px;height:42px;background:linear-gradient(#9c9c9c,#c6c6c6);"></div>
<div class="t" style="top:1398.6px;font-size:23.5px;line-height:23.5px;color:#1d6b40;font-weight:700;left:-796px;width:2000px;text-align:center;">Employee</div>
<div class="r" style="left:294px;top:1384px;width:2px;height:42px;background:#3a3a3a;"></div>
<div class="r" style="left:370px;top:1384px;width:2px;height:42px;background:#3a3a3a;"></div>
<svg class="r" style="left:20px;top:1400px;" width="18" height="24" viewBox="0 0 18 24"><polygon points="16,2 16,22 2,12" fill="#5c5c5c"/></svg>
<svg class="r" style="left:66px;top:1400px;" width="18" height="24" viewBox="0 0 18 24"><polygon points="2,2 2,22 16,12" fill="#5c5c5c"/></svg>
<svg class="r" style="left:322px;top:1398px;" width="24" height="24" viewBox="0 0 24 24"><rect x="10" y="2" width="4" height="20" fill="#8a8a8a"/><rect x="2" y="10" width="20" height="4" fill="#8a8a8a"/></svg>
<svg class="r" style="left:0;top:0" width="2232" height="260"><g transform="translate(34,68.5) scale(1.0)" fill="none" stroke="#a3a3a3" stroke-linecap="round"><path d="M38.5,5 C31,0.5 26,9 23,24 C20,39 18,52 5,53" stroke-width="3.2"/><path d="M16.5,18 H30.5" stroke-width="2.2"/><path d="M27.5,25 Q31.5,22.5 33.5,27.5 L39,42 Q41.5,47 47,41.5" stroke-width="2.5"/><path d="M48,24.5 Q45,22 41.5,26.5 L31.5,41 Q28.5,45.5 25.5,43.5" stroke-width="2.3"/><circle cx="38.8" cy="5.2" r="2.8" fill="#a3a3a3" stroke="none"/><circle cx="4.8" cy="52.5" r="2.8" fill="#a3a3a3" stroke="none"/><circle cx="27.8" cy="25.2" r="2" fill="#a3a3a3" stroke="none"/><circle cx="47.6" cy="24.6" r="2" fill="#a3a3a3" stroke="none"/><circle cx="25.8" cy="43.6" r="2" fill="#a3a3a3" stroke="none"/></g><path d="M146,74 V68.5 H123 L134.5,82 L123,95.5 H146 V90" fill="none" stroke="#a6a6a6" stroke-width="2"/><rect x="124" y="112" width="20" height="22" fill="#1f2833"/><path d="M126,111 H145 V141 H126 Q123,141 123,138 V114 Q123,111 126,111 Z" fill="none" stroke="#a6a6a6" stroke-width="2"/><path d="M145,135 H126 Q123,135 123,138" fill="none" stroke="#a6a6a6" stroke-width="2"/><rect x="124" y="156" width="20" height="22" fill="#1d2b20"/><path d="M126,155 H145 V185 H126 Q123,185 123,182 V158 Q123,155 126,155 Z" fill="none" stroke="#a6a6a6" stroke-width="2"/><path d="M145,179 H126 Q123,179 123,182" fill="none" stroke="#a6a6a6" stroke-width="2"/><rect x="354" y="68" width="20" height="22" fill="#28242c"/><path d="M356,67 H375 V97 H356 Q353,97 353,94 V70 Q353,67 356,67 Z" fill="none" stroke="#a6a6a6" stroke-width="2"/><path d="M375,91 H356 Q353,91 353,94" fill="none" stroke="#a6a6a6" stroke-width="2"/><rect x="354" y="112" width="20" height="22" fill="#1f2833"/><path d="M356,111 H375 V141 H356 Q353,141 353,138 V114 Q353,111 356,111 Z" fill="none" stroke="#a6a6a6" stroke-width="2"/><path d="M375,135 H356 Q353,135 353,138" fill="none" stroke="#a6a6a6" stroke-width="2"/><rect x="354" y="156" width="20" height="22" fill="#2b2222"/><path d="M356,155 H375 V185 H356 Q353,185 353,182 V158 Q353,155 356,155 Z" fill="none" stroke="#a6a6a6" stroke-width="2"/><path d="M375,179 H356 Q353,179 353,182" fill="none" stroke="#a6a6a6" stroke-width="2"/><rect x="562" y="68" width="20" height="22" fill="#1f2833"/><path d="M564,67 H583 V97 H564 Q561,97 561,94 V70 Q561,67 564,67 Z" fill="none" stroke="#a6a6a6" stroke-width="2"/><path d="M583,91 H564 Q561,91 561,94" fill="none" stroke="#a6a6a6" stroke-width="2"/><rect x="562" y="112" width="20" height="22" fill="#1d2b20"/><path d="M564,111 H583 V141 H564 Q561,141 561,138 V114 Q561,111 564,111 Z" fill="none" stroke="#a6a6a6" stroke-width="2"/><path d="M583,135 H564 Q561,135 561,138" fill="none" stroke="#a6a6a6" stroke-width="2"/><rect x="562" y="156" width="20" height="22" fill="#232323"/><path d="M564,155 H583 V185 H564 Q561,185 561,182 V158 Q561,155 564,155 Z" fill="none" stroke="#a6a6a6" stroke-width="2"/><path d="M583,179 H564 Q561,179 561,182" fill="none" stroke="#a6a6a6" stroke-width="2"/><polygon points="134.0,114.0 136.2,119.4 142.1,119.9 137.6,123.7 139.0,129.4 134.0,126.3 129.0,129.4 130.4,123.7 125.9,119.9 131.8,119.4" fill="none" stroke="#3b78bd" stroke-width="2"/><path d="M127,160 V173 Q134,178 141,173 V160" fill="none" stroke="#62aa6f" stroke-width="2"/><ellipse cx="134" cy="160" rx="7" ry="3" fill="none" stroke="#62aa6f" stroke-width="2"/><path d="M127,166.5 Q134,171 141,166.5" fill="none" stroke="#62aa6f" stroke-width="2"/><text x="364.5" y="88.5" text-anchor="middle" font-size="24" font-weight="400" fill="#8a4a9c" stroke="#8a4a9c" stroke-width="0.4">?</text><text x="364" y="130" text-anchor="middle" font-size="19" font-weight="400" fill="#3a74b5" stroke="#3a74b5" stroke-width="0.4">A</text><circle cx="363.5" cy="167" r="7.5" fill="none" stroke="#b83a3a" stroke-width="2.2"/><path d="M363.5,162 V167.5 H368" fill="none" stroke="#b83a3a" stroke-width="2"/><circle cx="570" cy="80" r="5.5" fill="none" stroke="#3b78bd" stroke-width="2"/><line x1="574" y1="84" x2="580" y2="89" stroke="#3b78bd" stroke-width="2"/><ellipse cx="573" cy="123" rx="5.5" ry="8.5" fill="none" stroke="#62aa6f" stroke-width="1.8"/><line x1="567.5" y1="123" x2="578.5" y2="123" stroke="#62aa6f" stroke-width="1.6"/><rect x="562" y="164.5" width="4" height="4" fill="#c83a3a"/><rect x="569" y="164.5" width="4" height="4" fill="#c83a3a"/><rect x="576" y="164.5" width="4" height="4" fill="#c83a3a"/><polyline points="265,79.5 270.5,86.0 276,79.5" fill="none" stroke="#bdbdbd" stroke-width="2.8"/><polyline points="320,123.5 325.5,130.0 331,123.5" fill="none" stroke="#bdbdbd" stroke-width="2.8"/><polyline points="264,167.5 269.5,174.0 275,167.5" fill="none" stroke="#bdbdbd" stroke-width="2.8"/><polyline points="476,79.5 481.5,86.0 487,79.5" fill="none" stroke="#bdbdbd" stroke-width="2.8"/><polyline points="447,123.5 452.5,130.0 458,123.5" fill="none" stroke="#bdbdbd" stroke-width="2.8"/><polyline points="528,167.5 533.5,174.0 539,167.5" fill="none" stroke="#bdbdbd" stroke-width="2.8"/><polyline points="816,79.5 821.5,86.0 827,79.5" fill="none" stroke="#bdbdbd" stroke-width="2.8"/><polyline points="728,123.5 733.5,130.0 739,123.5" fill="none" stroke="#bdbdbd" stroke-width="2.8"/><polyline points="768,167.5 773.5,174.0 779,167.5" fill="none" stroke="#bdbdbd" stroke-width="2.8"/><polyline points="1168,79.5 1173.5,86.0 1179,79.5" fill="none" stroke="#bdbdbd" stroke-width="2.8"/><polyline points="1518,167.5 1523.5,174.0 1529,167.5" fill="none" stroke="#bdbdbd" stroke-width="2.8"/><polyline points="1189,123.5 1194.5,130.0 1200,123.5" fill="none" stroke="#6a6a6a" stroke-width="2.8"/><polyline points="1735,95.5 1740.5,102.0 1746,95.5" fill="none" stroke="#bdbdbd" stroke-width="2.8"/><polyline points="1983,95.5 1988.5,102.0 1994,95.5" fill="none" stroke="#bdbdbd" stroke-width="2.8"/><path d="M930,115 L920.5,124.5 L897,100.5 L926,70.5 H949.5 V94 Q949.5,97.5 946.5,98" fill="none" stroke="#a6a6a6" stroke-width="2"/><circle cx="939" cy="81" r="2.5" fill="none" stroke="#a6a6a6" stroke-width="1.5"/><rect x="933" y="101" width="22.5" height="28.5" fill="#222a33" stroke="#a6a6a6" stroke-width="2"/><rect x="936" y="106" width="6" height="6" fill="#3b78bd"/><rect x="936" y="116" width="6" height="6" fill="#3b78bd"/><rect x="938" y="108" width="2" height="2" fill="#10243a"/><rect x="938" y="118" width="2" height="2" fill="#10243a"/><line x1="944" y1="109" x2="952" y2="109" stroke="#4a7fb5" stroke-width="2"/><line x1="944" y1="119" x2="952" y2="119" stroke="#4a7fb5" stroke-width="2"/><polygon points="983,81.5 1000.5,66.5 1011.5,66.5 1011.5,80 995.8,95" fill="none" stroke="#a6a6a6" stroke-width="2"/><rect x="1004.5" y="70" width="3.5" height="3.5" fill="#a6a6a6"/><line x1="990" y1="83" x2="1001" y2="73.5" stroke="#7a7a7a" stroke-width="1.6"/><line x1="994" y1="87" x2="1005" y2="77.5" stroke="#7a7a7a" stroke-width="1.6"/><path d="M998,137.5 L984.5,126.5 L999,112.5 H1010.5 V127" fill="none" stroke="#575757" stroke-width="1.6"/><rect x="1005" y="116" width="3" height="3" fill="#575757"/><text x="999" y="139" font-family="Liberation Serif" font-style="italic" font-size="17" fill="#575757">fx</text><rect x="983" y="164" width="10" height="18" fill="#1f5fb0"/><rect x="993" y="164" width="9" height="9" fill="#1f4f90"/><path d="M982.5,181.5 V156.5 H1013 V166" fill="none" stroke="#a6a6a6" stroke-width="2"/><line x1="993" y1="156.5" x2="993" y2="164" stroke="#a6a6a6" stroke-width="2"/><line x1="1003" y1="156.5" x2="1003" y2="164" stroke="#a6a6a6" stroke-width="2"/><line x1="982.5" y1="164" x2="1013" y2="164" stroke="#a6a6a6" stroke-width="2"/><line x1="993" y1="164" x2="993" y2="181.5" stroke="#6aa0dc" stroke-width="1.8"/><line x1="982.5" y1="173" x2="1002" y2="173" stroke="#6aa0dc" stroke-width="1.8"/><line x1="982.5" y1="181.5" x2="994" y2="181.5" stroke="#6aa0dc" stroke-width="2"/><polygon points="995,177.5 1003.5,169 1013,166.5 1013,176 1003.5,184.5" fill="#2b2b2b" stroke="#a6a6a6" stroke-width="2"/><rect x="1007" y="169.5" width="2.5" height="2.5" fill="#a6a6a6"/><path d="M1316,86.5 H1307 V66.5 H1322 V82" fill="none" stroke="#a6a6a6" stroke-width="2"/><line x1="1307" y1="76.5" x2="1322" y2="76.5" stroke="#a6a6a6" stroke-width="2"/><path d="M1330,87 H1337.5 V97.5 H1322.5 V93" fill="none" stroke="#a6a6a6" stroke-width="2"/><line x1="1318" y1="81" x2="1326.5" y2="89.5" stroke="#3b7fc4" stroke-width="2"/><polyline points="1320.5,90 1327,90 1327,83.5" fill="none" stroke="#3b7fc4" stroke-width="2"/><path d="M1322,115 V110.5 H1307 V121.5 H1313" fill="none" stroke="#a6a6a6" stroke-width="2"/><path d="M1322.5,131 H1337.5 V141.5 H1322.5 Z" fill="none" stroke="#a6a6a6" stroke-width="2"/><path d="M1328.5,120.5 H1337.5 V131" fill="none" stroke="#a6a6a6" stroke-width="2"/><line x1="1316" y1="117.5" x2="1324.5" y2="126" stroke="#3b7fc4" stroke-width="2"/><polyline points="1318.5,126.5 1325,126.5 1325,120" fill="none" stroke="#3b7fc4" stroke-width="2"/><path d="M1311,181 V159 H1332" fill="none" stroke="#3b7fc4" stroke-width="2"/><polyline points="1306,176 1311,182 1316,176" fill="none" stroke="#3b7fc4" stroke-width="2"/><polyline points="1327.5,154 1333.5,159 1327.5,164" fill="none" stroke="#3b7fc4" stroke-width="2"/><line x1="1313" y1="161" x2="1321" y2="169" stroke="#3b7fc4" stroke-width="2"/><polyline points="1315,169.5 1321.5,169.5 1321.5,163" fill="none" stroke="#3b7fc4" stroke-width="2"/><line x1="1325" y1="173" x2="1337.5" y2="185.5" stroke="#c0433e" stroke-width="1.8"/><line x1="1337.5" y1="173" x2="1325" y2="185.5" stroke="#c0433e" stroke-width="1.8"/><path d="M1572.5,116 V71 H1618 Z" fill="none" stroke="#a6a6a6" stroke-width="2"/><g transform="translate(1586.5,83.5) scale(0.78)" fill="none" stroke="#a3a3a3" stroke-linecap="round"><path d="M38.5,5 C31,0.5 26,9 23,24 C20,39 18,52 5,53" stroke-width="3.6799999999999997"/><path d="M16.5,18 H30.5" stroke-width="2.53"/><path d="M27.5,25 Q31.5,22.5 33.5,27.5 L39,42 Q41.5,47 47,41.5" stroke-width="2.875"/><path d="M48,24.5 Q45,22 41.5,26.5 L31.5,41 Q28.5,45.5 25.5,43.5" stroke-width="2.6449999999999996"/><circle cx="38.8" cy="5.2" r="2.8" fill="#a3a3a3" stroke="none"/><circle cx="4.8" cy="52.5" r="2.8" fill="#a3a3a3" stroke="none"/><circle cx="27.8" cy="25.2" r="2" fill="#a3a3a3" stroke="none"/><circle cx="47.6" cy="24.6" r="2" fill="#a3a3a3" stroke="none"/><circle cx="25.8" cy="43.6" r="2" fill="#a3a3a3" stroke="none"/></g><polygon points="1665,125.5 1691.7,71 1720.5,125.5" fill="#c2812a" stroke="#dca765" stroke-width="1.2"/><line x1="1692.4" y1="90" x2="1692.4" y2="110" stroke="#2c1d08" stroke-width="2.4"/><polyline points="1681.5,113.5 1697,127 1724,100.5" fill="none" stroke="#163a20" stroke-width="5"/><polyline points="1681.5,113.5 1697,127 1724,100.5" fill="none" stroke="#5fa373" stroke-width="2.4"/><path d="M1782,125.5 H1775.5 V71.5 H1837 V106" fill="none" stroke="#8e8e8e" stroke-width="3"/><line x1="1775.5" y1="78" x2="1837" y2="78" stroke="#8e8e8e" stroke-width="3"/><g fill="none" stroke="#2f74bc" stroke-width="3.6"><path d="M1787.5,115 Q1786,128 1797,128 Q1805.5,128 1806,117 Z"/><path d="M1816,117 Q1816.5,128 1825,128 Q1836,128 1834.5,115 Z"/><path d="M1806,116.5 H1816"/><path d="M1788,114 L1799,106"/><path d="M1834,114 L1823,106"/></g><rect x="1922" y="71" width="36.5" height="54" fill="#222" stroke="#a6a6a6" stroke-width="2"/><rect x="1927.5" y="76.5" width="25" height="9" fill="#1b55a3" stroke="#6f9fd6" stroke-width="1.6"/><rect x="1927" y="90" width="6" height="6" fill="#a6a6a6"/><rect x="1937" y="90" width="6" height="6" fill="#a6a6a6"/><rect x="1947" y="90" width="6" height="6" fill="#a6a6a6"/><rect x="1927" y="102" width="6" height="6" fill="#a6a6a6"/><rect x="1937" y="102" width="6" height="6" fill="#a6a6a6"/><rect x="1947" y="102" width="6" height="6" fill="#a6a6a6"/><rect x="1927" y="114" width="6" height="6" fill="#a6a6a6"/><rect x="1937" y="114" width="6" height="6" fill="#a6a6a6"/><rect x="1947" y="114" width="6" height="6" fill="#a6a6a6"/><rect x="2031" y="79" width="22.5" height="30.5" fill="#222" stroke="#a6a6a6" stroke-width="2"/><rect x="2034.5" y="82.5" width="15" height="5" fill="#1b55a3" stroke="#6f9fd6" stroke-width="1.3"/><rect x="2034.5" y="90" width="3.8" height="3.8" fill="#a6a6a6"/><rect x="2040.2" y="90" width="3.8" height="3.8" fill="#a6a6a6"/><rect x="2046" y="90" width="3.8" height="3.8" fill="#a6a6a6"/><rect x="2034.5" y="96" width="3.8" height="3.8" fill="#a6a6a6"/><rect x="2040.2" y="96" width="3.8" height="3.8" fill="#a6a6a6"/><rect x="2046" y="96" width="3.8" height="3.8" fill="#a6a6a6"/><rect x="2034.5" y="102" width="3.8" height="3.8" fill="#a6a6a6"/><rect x="2040.2" y="102" width="3.8" height="3.8" fill="#a6a6a6"/><rect x="2046" y="102" width="3.8" height="3.8" fill="#a6a6a6"/><path d="M2040,172 H2026.5 V145 H2057.5 V155" fill="none" stroke="#a6a6a6" stroke-width="2"/><line x1="2026.5" y1="151" x2="2057.5" y2="151" stroke="#a6a6a6" stroke-width="1.6"/><line x1="2036" y1="145" x2="2036" y2="170" stroke="#a6a6a6" stroke-width="1.6"/><line x1="2046.5" y1="145" x2="2046.5" y2="155" stroke="#a6a6a6" stroke-width="1.6"/><line x1="2026.5" y1="161" x2="2044" y2="161" stroke="#a6a6a6" stroke-width="1.6"/><rect x="2045" y="157" width="12.5" height="16.5" fill="#2b2b2b" stroke="#a6a6a6" stroke-width="2"/><rect x="2048" y="160" width="6.5" height="2.2" fill="#6f9fd6"/><rect x="2048" y="164.5" width="2.2" height="2.2" fill="#a6a6a6"/><rect x="2052.3" y="164.5" width="2.2" height="2.2" fill="#a6a6a6"/><rect x="2048" y="168.5" width="2.2" height="2.2" fill="#a6a6a6"/><rect x="2052.3" y="168.5" width="2.2" height="2.2" fill="#a6a6a6"/><path d="M1085,27 V24 Q1079.5,19 1079.5,15.5 A9.7,9.7 0 1 1 1098.9,15.5 Q1098.9,19 1093.4,24 V27 Z" fill="none" stroke="#a0a0a0" stroke-width="2"/><rect x="1084.5" y="27" width="9.5" height="4.5" fill="none" stroke="#a0a0a0" stroke-width="1.8"/><rect x="1086.3" y="33.8" width="5.8" height="2" fill="#a0a0a0"/><path d="M2103.5,20 V36 H2122 V31" fill="none" stroke="#a5a5a5" stroke-width="1.8"/><path d="M2108,29.5 Q2111,20 2120,20.5" fill="none" stroke="#a5a5a5" stroke-width="1.8"/><polygon points="2119,12 2127,20.5 2119,28.5" fill="none" stroke="#a5a5a5" stroke-width="1.6"/><polygon points="138,223 145,211 152,223" fill="#8a8a8a"/><polygon points="138,235 145,247 152,235" fill="#8a8a8a"/><line x1="194" y1="221" x2="211.5" y2="237.5" stroke="#6a6a6a" stroke-width="3.6"/><line x1="211.5" y1="221" x2="194" y2="237.5" stroke="#6a6a6a" stroke-width="3.6"/><polyline points="249,229 257.5,237.5 275,221" fill="none" stroke="#6a6a6a" stroke-width="3.8"/><g transform="translate(306,212.5) scale(0.565)" fill="none" stroke="#8c8c8c" stroke-linecap="round"><path d="M38.5,5 C31,0.5 26,9 23,24 C20,39 18,52 5,53" stroke-width="5.760000000000001"/><path d="M16.5,18 H30.5" stroke-width="3.9600000000000004"/><path d="M27.5,25 Q31.5,22.5 33.5,27.5 L39,42 Q41.5,47 47,41.5" stroke-width="4.5"/><path d="M48,24.5 Q45,22 41.5,26.5 L31.5,41 Q28.5,45.5 25.5,43.5" stroke-width="4.14"/><circle cx="38.8" cy="5.2" r="2.8" fill="#8c8c8c" stroke="none"/><circle cx="4.8" cy="52.5" r="2.8" fill="#8c8c8c" stroke="none"/><circle cx="27.8" cy="25.2" r="2" fill="#8c8c8c" stroke="none"/><circle cx="47.6" cy="24.6" r="2" fill="#8c8c8c" stroke="none"/><circle cx="25.8" cy="43.6" r="2" fill="#8c8c8c" stroke="none"/></g><polygon points="2216,222 2230,222 2223,235.5" fill="#c9c9c9"/></svg>
</body></html>
